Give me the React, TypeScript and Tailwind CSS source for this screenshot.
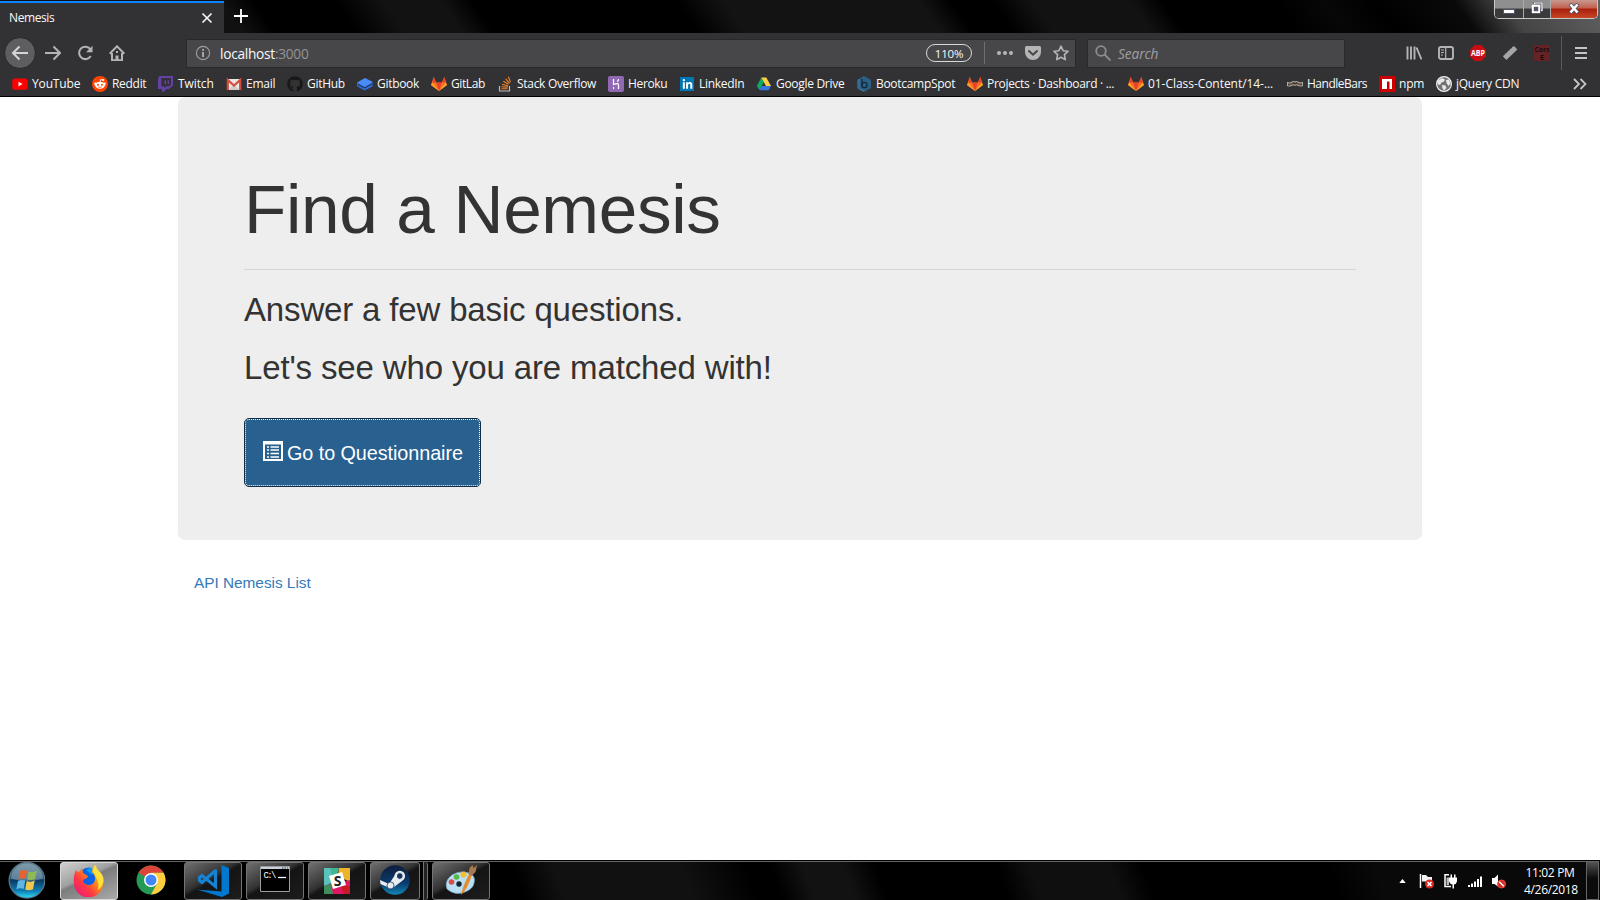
import type { ReactNode } from "react";
import { FaGithub, FaLinkedinIn } from "react-icons/fa";

function Gitlab() {
  return (
    <svg viewBox="0 0 16 16" className="size-4">
      <path d="M8 15 0 9 2.6 1l2.6 5.4h5.6L13.400 1 16 9z" fill="#fc6d26" />
      <path d="M8 15 5.200 6.400h5.600z" fill="#e24329" />
      <path d="M0 9 1.400 6.400 8 15zM16 9l-1.400-2.600L8 15z" fill="#fca326" />
      <path d="M1.400 6.400 2.600 1l2.600 5.400zM14.600 6.400 13.400 1l-2.600 5.400z" fill="#e24329" />
    </svg>
  );
}

const youtube = (
  <svg viewBox="0 0 16 16" className="size-4">
    <rect x="0.300" y="2.500" width="15.400" height="11.300" rx="2.600" fill="#f00" />
    <path d="M6.500 5.800v4.600L10.500 8.100z" fill="#fff" />
  </svg>
);
const reddit = (
  <svg viewBox="0 0 16 16" className="size-4">
    <circle cx="8" cy="8" r="8" fill="#ff4500" />
    <path d="M8 6.500 8.700 3.500l2.300.5" stroke="#fff" fill="none" strokeWidth=".9" />
    <circle cx="11.300" cy="4" r="1" fill="#fff" />
    <circle cx="3.500" cy="7.800" r="1.300" fill="#fff" />
    <circle cx="12.500" cy="7.800" r="1.300" fill="#fff" />
    <ellipse cx="8" cy="9.300" rx="4.900" ry="3.500" fill="#fff" />
    <circle cx="6" cy="8.700" r="1" fill="#ff4500" />
    <circle cx="10" cy="8.700" r="1" fill="#ff4500" />
    <path d="M6 10.800q2 1.300 4 0" stroke="#ff4500" fill="none" strokeWidth=".7" />
  </svg>
);
const twitch = (
  <svg viewBox="0 0 16 16" className="size-4">
    <path d="M1.300 0H15v9.500L11 13H8.500L6 15.700H4V13H0V3zM3.300 2V10.300h3v2l2-2h3L13 8.600V2z" fill="#6441a5" fillRule="evenodd" />
    <path d="M7.300 4.300v4M10.300 4.300v4" stroke="#6441a5" strokeWidth="1.400" />
  </svg>
);
const gmail = (
  <svg viewBox="0 0 16 16" className="size-4">
    <rect x="1" y="3" width="14" height="11" rx="1" fill="#e9e5e3" />
    <path d="M2.500 14 8 8.500l5.500 5.500z" fill="#d0cbc9" />
    <path d="M1.800 14V4L8 9.500 14.200 4v10" fill="none" stroke="#d54b3d" strokeWidth="2.200" />
  </svg>
);
const gitbook = (
  <svg viewBox="0 0 16 16" className="size-4">
    <path d="M0 7v3.300l7.500 4.200 8-4V7z" fill="#2a6fe0" />
    <path d="M1 8.500 7.500 12 15 8" fill="none" stroke="#26324a" strokeWidth="1.100" />
    <path d="M0 6.500 8 2l8 4-8.300 4.800z" fill="#4a8cf7" />
  </svg>
);
const stackOverflow = (
  <svg viewBox="0 0 16 16" className="size-4">
    <path d="M2.500 10v5h10v-5" fill="none" stroke="#bcbbbb" strokeWidth="1.200" />
    <path d="M4.500 12.800h6M4.500 10.700l6.200.4M5 8.300l6 1.400M6.300 5.300l5.200 3M8.700 2.800l3.800 4.600M11.400.8l2 5.500" stroke="#f48024" strokeWidth="1.100" />
  </svg>
);
const heroku = (
  <svg viewBox="0 0 16 16" className="size-4">
    <rect width="16" height="16" rx="2" fill="#9068b4" />
    <path d="M5.500 3v5.500q5-2 5 .5v4M10.500 3q0 1.500-1.200 2.700" fill="none" stroke="#fff" strokeWidth="1.300" />
    <path d="M5 10.500v3l1.600-1.500z" fill="#fff" />
  </svg>
);
const linkedin = (
  <span className="flex size-3.5 items-center justify-center bg-[#0077b5] text-white">
    <FaLinkedinIn size={11} />
  </span>
);
const drive = (
  <svg viewBox="0 0 16 16" className="size-4">
    <path d="M5.300 1.500 8 6 3.500 14 .8 10z" fill="#11a861" />
    <path d="M5.300 1.500h5L15 10H10z" fill="#ffcf48" />
    <path d="M5.500 10H15l-2.500 4.300h-9z" fill="#3777e3" />
  </svg>
);
const bootcamp = (
  <svg viewBox="0 0 16 16" className="size-4">
    <path d="m8 0 7 4v8l-7 4-7-4V4z" fill="#2c6085" />
    <path d="M6 3v6" stroke="#16283b" strokeWidth="1.300" />
    <circle cx="8.400" cy="9" r="2.700" fill="none" stroke="#16283b" strokeWidth="1.300" />
    <path d="M3 3v10l5 2" stroke="#3d7ba6" fill="none" />
  </svg>
);
const handlebars = (
  <svg viewBox="0 0 16 16" className="size-4">
    <path d="M.5 6.500q2 1 4.200-.3Q7 4.800 8 6.300q1-1.500 3.300-.1 2.200 1.300 4.200.3v3.200q-2.500.8-4.500-.4Q9 8.300 8 9.300 7 8.300 5 9.300q-2 1.200-4.500.4z" fill="#3a3531" stroke="#b5a99d" strokeWidth="1.100" />
    <path d="M2 8.200q2 .5 4-1M10 7.200q2 1.500 4 1" stroke="#8f857b" strokeWidth=".7" fill="none" />
  </svg>
);
const npm = (
  <svg viewBox="0 0 16 16" className="size-4">
    <path d="M0 0h16v16H0z" fill="#c00" />
    <path d="M3 3h10v10h-2.500V5.500H8V13H3z" fill="#fff" />
  </svg>
);
const globe = (
  <svg viewBox="0 0 16 16" className="size-4">
    <circle cx="8" cy="8" r="7.400" fill="#737373" stroke="#eee" strokeWidth="1.200" />
    <path d="M2 4.500 6 2l3 1.500-1 2-2.500 1L4 9 1.500 8zM6 9l3.500.5L10.500 12 8 14.500 6.300 12zM10 4l3-.5 1.500 4-2 2.500L10.500 7z" fill="#e8e8e8" />
  </svg>
);

const bookmarks: { icon: ReactNode; label: string; cls: string }[] = [
  { icon: youtube, label: "YouTube", cls: "w-[80px] tracking-[-0.15px]" },
  { icon: reddit, label: "Reddit", cls: "w-[66px] tracking-[-0.3px]" },
  { icon: twitch, label: "Twitch", cls: "w-[68px] tracking-[-0.1px]" },
  { icon: gmail, label: "Email", cls: "w-[61px] tracking-[-0.25px]" },
  { icon: <FaGithub size={16} color="#191717" />, label: "GitHub", cls: "w-[70px] tracking-[-0.3px]" },
  { icon: gitbook, label: "Gitbook", cls: "w-[74px] tracking-[-0.3px]" },
  { icon: <Gitlab />, label: "GitLab", cls: "w-[66px] tracking-[-0.4px]" },
  { icon: stackOverflow, label: "Stack Overflow", cls: "w-[111px] tracking-[-0.3px]" },
  { icon: heroku, label: "Heroku", cls: "w-[71px] tracking-[-0.35px]" },
  { icon: linkedin, label: "LinkedIn", cls: "w-[77px] tracking-[-0.3px]" },
  { icon: drive, label: "Google Drive", cls: "w-[100px] tracking-[-0.3px]" },
  { icon: bootcamp, label: "BootcampSpot", cls: "w-[111px] tracking-[-0.3px]" },
  { icon: <Gitlab />, label: "Projects · Dashboard · ...", cls: "w-[160px] tracking-[-0.3px]" },
  { icon: <Gitlab />, label: "01-Class-Content/14-...", cls: "w-[160px] pl-px tracking-[-0.05px]" },
  { icon: handlebars, label: "HandleBars", cls: "w-[92px] tracking-[-0.5px]" },
  { icon: npm, label: "npm", cls: "w-[57px] tracking-[-0.2px]" },
  { icon: globe, label: "jQuery CDN", cls: "w-[83px] tracking-[-0.25px]" },
];

function TitleBar() {
  return (
    <div className="flex h-[33px] bg-[linear-gradient(55deg,#111_0,#111_15%,#000_17%,#000_22%,#121212_25%,#121212_28.5%,#000_30.5%,#000_43%,#131313_46%,#131313_58%,#000_60%,#000_62.5%,#121212_65%,#121212_71%,#000_73%,#000_80%,#070707_83%,#000_86%,#0a0a0a_91%,#444_94%,#606060_100%)]">
      <div className="mt-px flex w-[224px] items-center justify-between border-t-2 border-[#0a84ff] bg-[#323234] pr-[11px] pl-[9px] text-[#f9f9fa]">
        <span className="text-[12px] tracking-[-0.4px]">Nemesis</span>
        <svg viewBox="0 0 12 12" className="size-3">
          <path d="m1.500 1.500 9 9m0-9-9 9" stroke="#f4f4f4" strokeWidth="1.700" />
        </svg>
      </div>
      <svg viewBox="0 0 14 14" className="mt-[9px] ml-[10px] size-3.5">
        <path d="M7 0v14M0 7h14" stroke="#fff" strokeWidth="1.800" />
      </svg>
      <div className="mr-[2px] ml-auto flex h-[19px] w-[104px] overflow-hidden rounded-b-[5px] border border-t-0 border-[#c8c8c8] bg-[#222]">
        <div className="flex w-[29px] items-end justify-center border-r border-[#aaa] bg-linear-to-b from-[#8f8f8f] from-45% to-[#3a3a3c] to-50% pb-[4px]">
          <div className="h-[5px] w-[12px] rounded-[1px] border border-[#50536a] bg-white" />
        </div>
        <div className="flex w-[27px] items-center justify-center border-r border-[#aaa] bg-linear-to-b from-[#8f8f8f] from-45% to-[#3a3a3c] to-50% pb-[2px]">
          <svg viewBox="0 0 12 12" className="size-3">
            <path d="M3.500 2V1h7.500v7.500h-1" fill="none" stroke="#50536a" strokeWidth="2.500" />
            <path d="M3.500 2V1h7.500v7.500h-1" fill="none" stroke="#fff" strokeWidth="1.200" />
            <rect x="1.800" y="3.800" width="6.400" height="6.400" fill="#50536a" stroke="#fff" strokeWidth="2" />
          </svg>
        </div>
        <div className="flex flex-1 items-center justify-center bg-[linear-gradient(180deg,#c89a90_0,#c1604c_45%,#a81f0c_50%,#c84526_100%)] pb-[2px]">
          <svg viewBox="0 0 12 11" className="h-[11px] w-3">
            <path d="m2 1 8 9m0-9-8 9" stroke="#50536a" strokeWidth="4" />
            <path d="m2.500 1.500 7 8m0-8-7 8" stroke="#fff" strokeWidth="2.500" />
          </svg>
        </div>
      </div>
    </div>
  );
}

function NavBar() {
  return (
    <div className="flex h-[40px] items-center bg-[#323234] text-[#b4b4b5]">
      <div className="ml-[4px] flex size-8 items-center justify-center rounded-full border border-[#28282a] bg-[#5e5e60]">
        <svg viewBox="0 0 16 16" className="size-4">
          <path d="M16 8H1M7.500 1.500 1 8l6.500 6.500" fill="none" stroke="#d5d5d6" strokeWidth="2" />
        </svg>
      </div>
      <svg viewBox="0 0 16 16" className="ml-[9px] size-4">
        <path d="M0 8h15M8.500 1.500 15 8l-6.500 6.500" fill="none" stroke="currentColor" strokeWidth="2" />
      </svg>
      <svg viewBox="0 0 16 16" className="ml-[16px] size-4">
        <path d="M13.500 4.500A6.200 6.200 0 1 0 13.700 11" fill="none" stroke="currentColor" strokeWidth="2" />
        <path d="M15.500.8v6.400H9z" fill="currentColor" />
      </svg>
      <svg viewBox="0 0 16 16" className="ml-[16px] size-4">
        <path d="M.7 8.700 8 1.300l7.300 7.400M3 8v7.200h10V8" fill="none" stroke="currentColor" strokeWidth="2" />
        <path d="M6.500 15v-4.500h3V15z" fill="currentColor" />
        <path d="M8 6v2" stroke="currentColor" strokeWidth="2" />
      </svg>
      <div className="mr-[11px] ml-[61px] flex h-[29px] w-[890px] items-center border border-[#29292b] bg-[#474749] pl-[8px]">
        <svg viewBox="0 0 16 16" className="size-4">
          <circle cx="8" cy="8" r="6.600" fill="none" stroke="#a0a0a1" strokeWidth="1.100" />
          <path d="M8 7v5M8 4v1.800" stroke="#b1b1b2" strokeWidth="1.800" />
        </svg>
        <span className="mt-[2px] ml-[9px] text-[13.700px] tracking-[-0.27px] text-[#f9f9fa]">
          localhost<span className="text-[#949495]">:3000</span>
        </span>
        <span className="ml-auto flex h-[18px] w-[46px] items-center justify-center rounded-full border border-[#d8d8d9] pt-px text-[11.500px] tracking-[-0.2px] text-[#f9f9fa]">
          110%
        </span>
        <div className="ml-3 h-[22px] w-px bg-[#6a6f78]" />
        <svg viewBox="0 0 16 16" className="ml-[12px] size-4" fill="#b5b5b6">
          <circle cx="2" cy="8" r="2" />
          <circle cx="8" cy="8" r="2" />
          <circle cx="14" cy="8" r="2" />
        </svg>
        <svg viewBox="0 0 16 16" className="ml-[12px] size-4">
          <path d="M1.500 1h13Q16 1 16 2.500V7a8 8 0 0 1-16 0V2.500Q0 1 1.500 1z" fill="#b5b5b6" />
          <path d="m4 6 4 3.700L12 6" fill="none" stroke="#474749" strokeWidth="2" strokeLinecap="round" />
        </svg>
        <svg viewBox="0 0 16 16" className="mr-[6px] ml-[12px] size-4">
          <path d="m8 1.200 2.100 4.500 4.900.6-3.600 3.400.9 4.900L8 12.200l-4.300 2.400.9-4.900L1 6.300l4.900-.6z" fill="none" stroke="#b5b5b6" strokeWidth="1.600" strokeLinejoin="round" />
        </svg>
      </div>
      <div className="flex h-[29px] w-[258px] items-center border border-[#29292b] bg-[#474749] pl-[7px]">
        <svg viewBox="0 0 16 16" className="size-4">
          <circle cx="6" cy="6" r="4.800" fill="none" stroke="#8d8d8e" strokeWidth="1.800" />
          <path d="m9.500 9.500 6 6" stroke="#8d8d8e" strokeWidth="1.800" />
        </svg>
        <span className="mt-[2px] ml-[7px] text-[13.700px] tracking-[-0.1px] text-[#a0a0a1] italic">Search</span>
      </div>
      <svg viewBox="0 0 16 16" className="ml-[61px] size-4">
        <path d="M1.500 1.500v13M5 1.500v13M8.500 1.500v13M10.500 2.500l5 12" stroke="currentColor" strokeWidth="1.900" fill="none" />
      </svg>
      <svg viewBox="0 0 16 16" className="ml-[16px] size-4">
        <rect x="1" y="2" width="14" height="12" rx="2" fill="none" stroke="currentColor" strokeWidth="1.900" />
        <path d="M7.700 2v12M3 5h3M3 7.500h3M3 10h2" stroke="currentColor" strokeWidth="1.200" />
      </svg>
      <svg viewBox="0 0 16 16" className="ml-[16px] size-4">
        <path d="M4.700 0h6.600L16 4.700v6.600L11.300 16H4.700L0 11.300V4.700z" fill="#c70d12" />
        <text x="1" y="11" fontSize="8" fontWeight="bold" fill="#fff" textLength="14" lengthAdjust="spacingAndGlyphs">ABP</text>
      </svg>
      <svg viewBox="0 0 16 16" className="ml-[16px] size-4">
        <path d="m2.700 13.300 11-10.600" stroke="#a5a5a6" strokeWidth="4.800" />
        <path d="m1.500 11 10-9.600" stroke="#c5c5c6" strokeWidth=".9" strokeDasharray="1.300 1" />
      </svg>
      <svg viewBox="0 0 16 16" className="ml-[16px] size-4">
        <path d="M0 0h16v16H0z" fill="#642325" />
        <text x="0.500" y="7" fontSize="7" fontWeight="bold" fill="#1b0d0e" textLength="15" lengthAdjust="spacingAndGlyphs">Cors</text>
        <text x="8" y="14.500" textAnchor="middle" fontSize="7" fontWeight="bold" fill="#1b0d0e">E</text>
      </svg>
      <div className="ml-[11px] h-[34px] w-px bg-[#5b5b5d]" />
      <svg viewBox="0 0 16 16" className="ml-[11px] size-4">
        <path d="M2 3h12M2 8h12M2 13h12" stroke="#c4c4c5" strokeWidth="2" />
      </svg>
    </div>
  );
}

function BookmarksBar() {
  return (
    <div className="flex h-6 items-center border-b border-black bg-[#323234] pb-px pl-[12px] text-[12px] text-[#f9f9fa]">
      {bookmarks.map((b, i) => (
        <div key={i} className={"flex shrink-0 items-center gap-1 whitespace-nowrap " + b.cls}>
          <span className="flex size-4 shrink-0 items-center justify-center">{b.icon}</span>
          <span>{b.label}</span>
        </div>
      ))}
      <svg viewBox="0 0 14 12" className="mr-[13px] ml-auto h-3 w-3.5">
        <path d="m1 1 5 5-5 5M7.500 1l5 5-5 5" fill="none" stroke="#c4c4c5" strokeWidth="1.800" />
      </svg>
    </div>
  );
}

function Page() {
  return (
    <main className="flex-1 bg-white px-[178px] font-['Liberation_Sans',Arial,sans-serif] text-[#333]">
      <section className="flex h-[443px] flex-col items-start rounded-[7px] bg-[#eee] px-[66px] pt-[74px]">
        <h1 className="text-[69.300px] leading-[76px] tracking-[-0.34px]">Find a Nemesis</h1>
        <hr className="mt-[22px] h-px w-full border-0 bg-[#d5d5d5]" />
        <h2 className="mt-[22px] text-[33px] leading-9 tracking-[-0.16px]">Answer a few basic questions.</h2>
        <h2 className="mt-[22px] text-[33px] leading-9 tracking-[-0.14px]">Let's see who you are matched with!</h2>
        <button className="mt-[32px] flex h-[69px] w-[237px] items-center rounded-[5px] border border-[#122b40] bg-[#286090] text-white">
          <span className="flex h-full w-full items-center rounded-[4px] border border-dotted border-white pl-[17px]">
            <svg viewBox="0 0 20 20" className="mb-[3px] size-5">
              <path d="M1 1h18v18H1z" fill="none" stroke="#fff" strokeWidth="2" />
              <path d="M1 2h18" stroke="#fff" strokeWidth="3" />
              <path d="M4 6h2M4 9h2M4 12.500h2M4 16h2M7.500 6H16M7.500 9H16M7.500 12.500H16M7.500 16H16" stroke="#fff" strokeWidth="1.700" />
            </svg>
            <span className="mt-[2px] ml-[4px] text-[19.800px] tracking-[-0.06px] whitespace-nowrap">Go to Questionnaire</span>
          </span>
        </button>
      </section>
      <a className="mt-[32px] ml-[16px] block text-[15.400px] leading-[22px] tracking-[-0.03px] text-[#337ab7]">API Nemesis List</a>
    </main>
  );
}

function TaskButton({ children, active }: { children: ReactNode; active?: boolean }) {
  return (
    <div
      className={
        "mr-1 flex h-[38px] w-[58px] items-center justify-center rounded-[3px] border pb-px " +
        (active
          ? "border-[#d8d8d8] bg-[linear-gradient(155deg,#d0d0d0_0,#a0a0a0_40%,#7c7c7c_46%,#aaa_100%)]"
          : "border-[#747474] bg-[linear-gradient(150deg,#707070_0,#333_42%,#141414_50%,#1c1c1c_100%)]")
      }
    >
      {children}
    </div>
  );
}

function Taskbar() {
  return (
    <footer className="flex h-10 border-t border-black bg-[linear-gradient(70deg,#000_0,#000_32.5%,#111_35%,#111_43%,#000_47%,#000_48.5%,#121212_50.5%,#121212_53%,#000_55%,#000_62.5%,#0f0f0f_64.5%,#0f0f0f_69.5%,#000_71.5%,#000_83%,#090909_86%)]">
      <div className="flex flex-1 border-t border-[#666] pl-[7px] text-white">
        <svg viewBox="0 0 38 38" className="mr-[15px] size-[38px]">
          <defs>
            <linearGradient id="orb" x1="0" y1="0" x2="0" y2="1">
              <stop offset="0" stopColor="#5f7f93" />
              <stop offset=".45" stopColor="#2a5575" />
              <stop offset=".5" stopColor="#0a3a63" />
              <stop offset=".8" stopColor="#0f7fb4" />
              <stop offset="1" stopColor="#2fe0f5" />
            </linearGradient>
          </defs>
          <circle cx="20" cy="18.300" r="17.800" fill="url(#orb)" stroke="#5b788a" strokeWidth="1.300" />
          <path d="M4 16.500a16 15 0 0 1 32 0q-16 5-32 0z" fill="#b8cdd8" opacity=".38" />
          <path d="M13 9.500q3.500-2.500 7-.8L18.600 17q-3.600-1.500-7.300.5z" fill="#e8622f" />
          <path d="M21.500 9.400q4 1.500 8.500-.6L28 17q-4 2-8 .3z" fill="#8fb955" />
          <path d="M11 19q3.500-2 7.300-.4L16.700 27q-3.700-1.500-7.400.4z" fill="#5eb5e6" />
          <path d="M19.700 19q4 1.600 8-.4L26 27.200q-4 2-7.800.3z" fill="#f2c54c" />
        </svg>
        <TaskButton active>
          <svg viewBox="0 0 32 32" className="size-8">
            <defs>
              <linearGradient id="fox" x1="1" y1="0" x2="0" y2="1">
                <stop offset="0" stopColor="#fff44f" />
                <stop offset=".35" stopColor="#ff980e" />
                <stop offset=".65" stopColor="#ff3647" />
                <stop offset="1" stopColor="#e31587" />
              </linearGradient>
            </defs>
            <circle cx="16" cy="13" r="10.500" fill="#0a63e6" />
            <path d="M13 5q5-4 9 0l-3 5z" fill="#00a2f5" />
            <path d="M3 5q1 2 3 2l3-4 1 5 5 3-1 2-4 2q0 4 5 5 6 0 7-5 1-4-3-8 0-5 3-7 0 4 4 7 5 5 4 11A14.500 14.500 0 0 1 1 18Q0 11 3 5z" fill="url(#fox)" />
            <path d="M20 7q0-5 3-7 0 4 4 7 4 4 3.500 10-1.500 5-6 8 2-5 0-9-1-5-4.500-9z" fill="#ffe13d" />
          </svg>
        </TaskButton>
        <div className="mr-1 flex h-[38px] w-[58px] items-center justify-center pb-[2px]">
          <svg viewBox="0 0 30 30" className="size-[30px]">
            <circle cx="15" cy="15" r="14.500" fill="#249b55" />
            <path d="M15 15 2.500 7.700A14.500 14.500 0 0 1 27.600 7.800H15z" fill="#db4437" />
            <path d="M15 7.800h12.600A14.500 14.500 0 0 1 15 29.500L21.300 18z" fill="#ffcd40" />
            <circle cx="15" cy="15" r="7" fill="#fff" />
            <circle cx="15" cy="15" r="5.500" fill="#4285f4" />
          </svg>
        </div>
        <TaskButton>
          <svg viewBox="0 0 32 32" className="size-8">
            <path d="M24.500 0 32 3v25.500L25 32 0 24.500l24.500 2z" fill="#0078d0" />
            <path d="M18.500 4.500v17L5 10.500l-2.500 2v3L5 17.500 18.500 5.500" fill="none" stroke="#1583d3" strokeWidth="3.200" />
          </svg>
        </TaskButton>
        <TaskButton>
          <svg viewBox="0 0 30 26" className="mb-[3px] h-[26px] w-[30px]">
            <path d="M.5.500h29v25H.5z" fill="#000" stroke="#9c9c9c" />
            <path d="M1 1h28v2H1z" fill="#c8d0d8" />
            <path d="M22 2h6" stroke="#345" strokeDasharray="1.500 1" />
            <text x="3.500" y="12" fontSize="9" fill="#fff" className="font-['Liberation_Mono',monospace]" textLength="13">C:\</text>
            <path d="M18 11.500h8" stroke="#fff" strokeWidth="1.300" />
          </svg>
        </TaskButton>
        <TaskButton>
          <svg viewBox="0 0 26 26" className="size-[26px]">
            <path d="M0 0h15L11 13 0 18z" fill="#3eb890" />
            <path d="M0 0h6l7 26H0z" fill="#70cadb" opacity=".55" />
            <path d="M15 0h11v14L14 8z" fill="#ecb32d" />
            <path d="M0 26V18l26-6v14z" fill="#e01765" />
            <path d="M0 18l7-1.500L9 26H0z" fill="#3f8f5c" />
            <path d="M17 18h9v8h-6z" fill="#c81828" />
            <path d="m5 8 13-4 4 13-13 4z" fill="#fff" />
            <text x="13.500" y="17.500" textAnchor="middle" fontSize="14" fontWeight="bold" fill="#222">S</text>
          </svg>
        </TaskButton>
        <div className="mr-[4px] flex h-[38px] gap-[3px]">
          <div className="flex w-[50px] items-center justify-center rounded-[3px] border border-[#747474] bg-[linear-gradient(150deg,#707070_0,#333_42%,#141414_50%,#1c1c1c_100%)] pb-[2px]">
            <svg viewBox="0 0 30 30" className="size-[30px]">
              <defs>
                <linearGradient id="steam" x1="0" y1="0" x2="0" y2="1">
                  <stop offset="0" stopColor="#101d3c" />
                  <stop offset=".6" stopColor="#0a3a6e" />
                  <stop offset="1" stopColor="#1387b8" />
                </linearGradient>
              </defs>
              <circle cx="15" cy="15" r="14.800" fill="url(#steam)" />
              <path d="m0 15 9 4 6-9 7 6-8 6-3 1.500L.5 19z" fill="#e8edf2" />
              <circle cx="19.800" cy="11" r="5.300" fill="#e8edf2" />
              <circle cx="19.800" cy="11" r="3.400" fill="#16365f" stroke="#fff" />
              <circle cx="10.500" cy="20.500" r="3.500" fill="#e8edf2" stroke="#16365f" strokeWidth=".8" />
            </svg>
          </div>
          <div className="w-[5px] rounded-r-[3px] border-x border-[#747474] bg-[#222]" />
        </div>
        <TaskButton>
          <svg viewBox="0 0 32 32" className="mb-px size-8">
            <path d="M2 25Q-1 17 7 11q8-5 17-2 7 3 5 10-1 6-9 9-10 4-18-3z" fill="#b9dff4" stroke="#79a9c9" strokeWidth=".7" />
            <circle cx="14" cy="20" r="2.700" fill="#14242e" />
            <circle cx="6.500" cy="18" r="2.800" fill="#df4b40" />
            <circle cx="11.500" cy="13" r="2.800" fill="#57b845" />
            <circle cx="18.500" cy="10.500" r="3" fill="#f7be2f" />
            <path d="M16 31Q17 24 24 10l3 1Q22 26 16 31z" fill="#e88b2d" />
            <path d="m23.500 10 1-6 3-3 1 3L32 1l-1.500 7-4 4z" fill="#a9784e" />
          </svg>
        </TaskButton>
        <div className="mr-[10px] ml-auto flex items-center">
          <svg viewBox="0 0 8 5" className="mr-[13px] h-1 w-[7px]">
            <path d="M0 5 4 0l4 5z" fill="#fff" />
          </svg>
          <svg viewBox="0 0 16 16" className="mr-[8px] size-4">
            <path d="M1.500 1v14" stroke="#fff" strokeWidth="1.500" />
            <path d="M3 2h4l2 2h4v6H8L6.500 8.500H3z" fill="#f2f2f2" />
            <circle cx="10.500" cy="11" r="4.500" fill="#d92a22" />
            <path d="m8.500 9 4 4m0-4-4 4" stroke="#fff" strokeWidth="1.600" />
          </svg>
          <svg viewBox="0 0 16 16" className="mr-[8px] size-4">
            <path d="M6 1.800H2V13.500h6" fill="none" stroke="#fff" strokeWidth="1.500" />
            <path d="M3.500 4.500H6v7.500H3.500z" fill="#bbb" />
            <path d="M6 4.500h8v4q-1 3-3 3v4H9.500v-4Q7 11 6 8.500zM7.500 1.500H9V5H7.500zM11 1.500h1.500V5H11z" fill="#fff" />
          </svg>
          <svg viewBox="0 0 16 16" className="mr-[8px] size-4">
            <path d="M1 12h2v2H1zM4 10.500h2V14H4zM7 8.500h2V14H7zM10 6h2v8h-2zM13 3.500h2V14h-2z" fill="#fff" />
          </svg>
          <svg viewBox="0 0 16 16" className="mr-[17px] size-4">
            <path d="M1 5h2.500L7 1.500v12L3.500 11H1z" fill="#fff" />
            <circle cx="10.500" cy="11" r="4" fill="#d92a22" stroke="#e84a42" />
            <path d="m8.200 8.700 4.600 4.600" stroke="#fff" strokeWidth="1.500" />
          </svg>
          <div className="w-[52px] text-center text-[12px] leading-[17px] tracking-[-0.33px] whitespace-nowrap">
            <div>11:02 PM</div>
            <div>4/26/2018</div>
          </div>
        </div>
      </div>
      <div className="mr-px w-[13px] border border-[#666] bg-linear-to-b from-[#555] to-[#0b0b0b] to-45%" />
    </footer>
  );
}

export default function App() {
  return (
    <div className="flex h-[900px] w-[1600px] flex-col overflow-hidden bg-white font-['Open_Sans','Noto_Sans',sans-serif]">
      <TitleBar />
      <NavBar />
      <BookmarksBar />
      <Page />
      <Taskbar />
    </div>
  );
}
